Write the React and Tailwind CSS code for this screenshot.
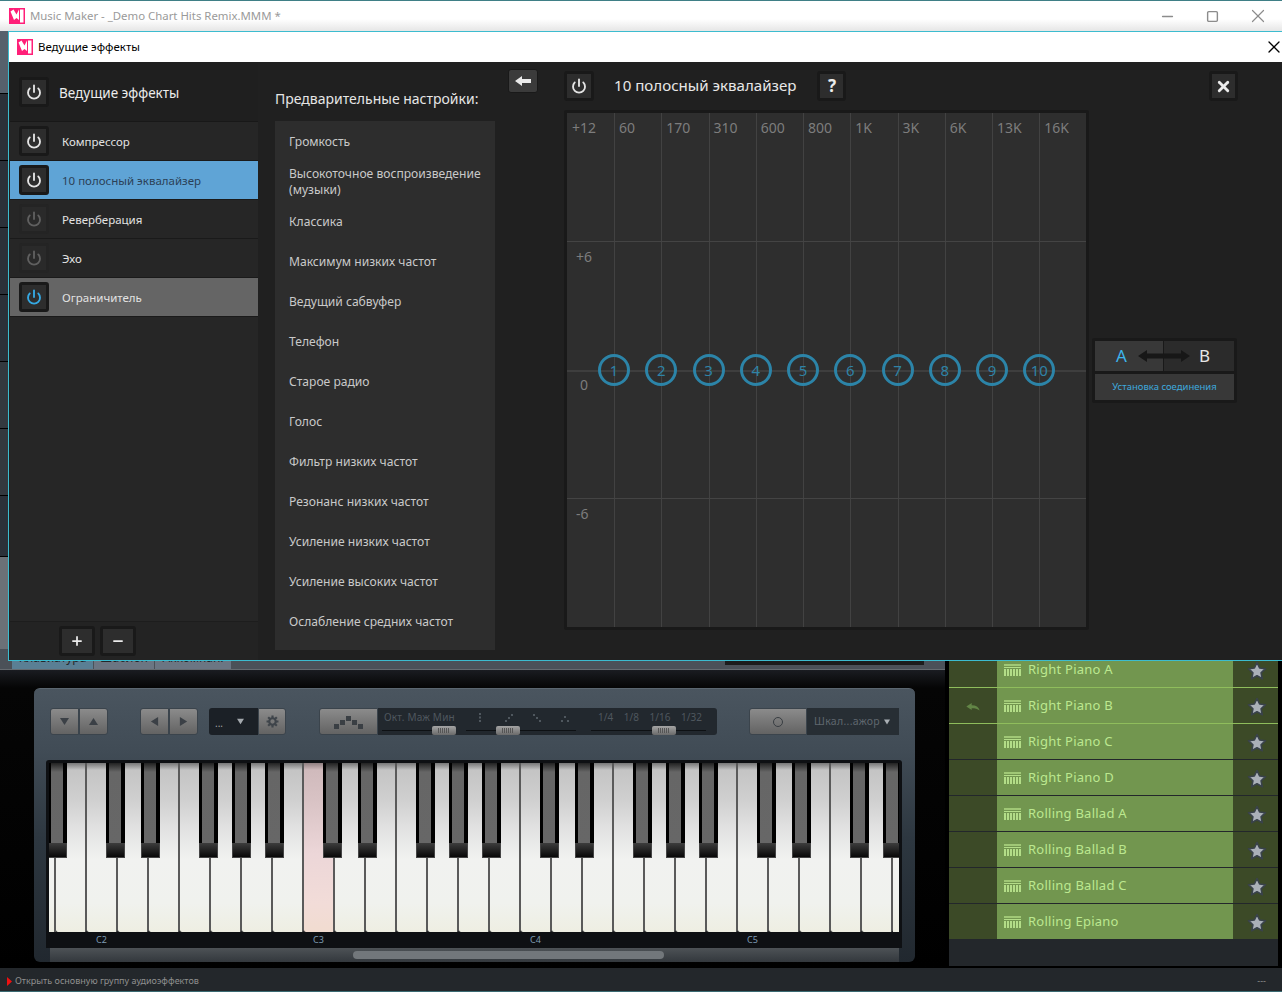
import React from "react";
import { Power, X, Minus, Plus, Square } from "lucide-react";

const effects = [
  { name: "Компрессор", state: "on" },
  { name: "10 полосный эквалайзер", state: "on", row: "bg-[#5fa4d6] text-[#2b4156]" },
  { name: "Реверберация", state: "off" },
  { name: "Эхо", state: "off" },
  { name: "Ограничитель", state: "active", row: "bg-[#656565] text-[#e2e2e2]" },
];

const presets = [
  "Громкость",
  "Высокоточное воспроизведение (музыки)",
  "Классика",
  "Максимум низких частот",
  "Ведущий сабвуфер",
  "Телефон",
  "Старое радио",
  "Голос",
  "Фильтр низких частот",
  "Резонанс низких частот",
  "Усиление низких частот",
  "Усиление высоких частот",
  "Ослабление средних частот",
];

const bands = ["60", "170", "310", "600", "800", "1K", "3K", "6K", "13K", "16K"];
const sounds = ["Right Piano A", "Right Piano B", "Right Piano C", "Right Piano D", "Rolling Ballad A", "Rolling Ballad B", "Rolling Ballad C", "Rolling Epiano"];

// black keys of one octave, px from the left of the keys area
const octave = [56.5, 91.5, 149.5, 182.5, 215.5];
const blackKeys = [-1.5];
for (let k = 0; k < 4; k++) octave.forEach((x) => blackKeys.push(x + k * 217));

function Logo({ className }) {
  return (
    <svg viewBox="0 0 16 16" className={className}>
      <rect width="16" height="16" fill="#ff1f78" />
      <path d="M1.5 3.5 L4.5 1.5 L7.5 6.5 L10 1.5 L10 12 L7.5 10 L5 12 Z" fill="#fff" />
      <rect x="11" y="1.5" width="3.5" height="13" fill="#fff" />
    </svg>
  );
}

function PowerBtn({ state = "on" }) {
  const frame = state === "off" ? "border-[#242424] bg-[#2a2a2a]" : "border-[#191919] bg-[#2d2d2d]";
  const icon = state === "off" ? "text-[#606060]" : state === "active" ? "text-[#35a9e4]" : "text-[#e4e4e4]";
  return (
    <div className={`flex h-[30px] w-[30px] shrink-0 items-center justify-center rounded-[3px] border-[3px] ${frame}`}>
      <Power size={16} strokeWidth={2.8} className={icon} />
    </div>
  );
}

function SquareBtn({ children, w = "w-[29px]" }) {
  return (
    <div className={`flex h-[30px] items-center justify-center rounded-[3px] border-[3px] border-[#191919] bg-[#2d2d2d] text-[#ececec] ${w}`}>
      {children}
    </div>
  );
}

function EffectsColumn() {
  return (
    <div className="flex w-[248px] shrink-0 flex-col bg-[#262626]">
      <div className="flex h-[60px] items-center gap-[10px] border-b border-[#181818] bg-[#1f1f1f] pl-[9px] text-[13.5px] text-[#ececec]">
        <PowerBtn />
        <span className="mt-[4px]">Ведущие эффекты</span>
      </div>
      {effects.map((fx) => (
        <div key={fx.name} className={`flex h-[39px] items-center gap-[13px] border-b border-[#1a1a1a] pl-[9px] text-[11.5px] ${fx.row || "text-[#e2e2e2]"}`}>
          <PowerBtn state={fx.state} />
          <span className="mt-[1px]">{fx.name}</span>
        </div>
      ))}
      <div className="flex-1" />
      <div className="flex h-[39px] items-start gap-[5px] border-t border-[#1d1d1d] bg-[#232323] pl-[49px] pt-[4px]">
        <SquareBtn w="w-[36px]"><Plus size={14} strokeWidth={3} /></SquareBtn>
        <SquareBtn w="w-[36px]"><Minus size={14} strokeWidth={3} /></SquareBtn>
      </div>
    </div>
  );
}

function PresetColumn() {
  return (
    <div className="flex w-[237px] shrink-0 flex-col pl-[17px]">
      <div className="flex h-[59px] items-center pt-[14px] text-[14px] text-[#e6e6e6]">Предварительные настройки:</div>
      <div className="h-[529px] w-[220px] bg-[#2d2d2d] pl-[14px] pr-[4px]">
        {presets.map((p) => (
          <div key={p} className="flex h-[40px] items-center text-[12.1px] leading-[16px] text-[#c9c9c9]">
            <span className="mt-[2px]">{p}</span>
          </div>
        ))}
      </div>
    </div>
  );
}

function Equalizer() {
  return (
    <div className="h-[520px] w-[525px] shrink-0 rounded-[2px] border-[3px] border-[#191919] bg-[#2e2e2e]">
      <div className="relative flex h-full overflow-hidden">
        <div className="relative w-[47px] shrink-0 text-[14px] text-[#7d7d7d]">
          <span className="absolute left-[5px] top-[4px]">+12</span>
          <span className="absolute left-[9px] top-[133px]">+6</span>
          <span className="absolute left-[13px] top-[261px]">0</span>
          <span className="absolute left-[9px] top-[390px]">-6</span>
        </div>
        {bands.map((b) => (
          <div key={b} className="w-[47.25px] shrink-0 border-l border-[#424242] pl-[4px] pt-[4px] text-[14px] text-[#7d7d7d]">
            {b}
          </div>
        ))}
        <div className="absolute inset-x-0 top-[128px] h-px bg-[#444444]" />
        <div className="absolute inset-x-0 top-[257px] h-[2px] bg-[#3e3e3e]" />
        <div className="absolute inset-x-0 top-[385px] h-px bg-[#444444]" />
        <div className="absolute left-[31px] top-[241px] flex gap-[15.25px]">
          {bands.map((b, i) => (
            <div key={b} className="flex h-[32px] w-[32px] items-center justify-center rounded-full border-[3px] border-[#2c84a8] text-[15px] text-[#2f83a6]">
              {i + 1}
            </div>
          ))}
        </div>
      </div>
    </div>
  );
}

function AbSwitch() {
  return (
    <div className="relative ml-[3px] mt-[228px] h-[65px] w-[145px] rounded-[2px] border-[3px] border-[#191919] bg-[#191919]">
      <div className="flex h-[30px] gap-[1px] text-[17px] leading-[30px]">
        <div className="w-[68px] bg-[#383838] pl-[21px] text-[#3db4ec]">A</div>
        <div className="flex-1 bg-[#2b2b2b] pl-[35px] text-[#e6e6e6]">B</div>
      </div>
      <div className="mt-[3px] flex h-[26px] items-center justify-center bg-[#383838] text-[9.5px] text-[#3ea8dc]">Установка соединения</div>
      <svg viewBox="0 0 52 12" className="absolute left-[43px] top-[9px] h-[12px] w-[52px]">
        <path d="M0 6 L9 0 V3.5 H43 V0 L52 6 L43 12 V8.5 H9 V12 Z" fill="#171717" />
      </svg>
    </div>
  );
}

function EffectPanel() {
  return (
    <div className="flex flex-1 pl-[13px]">
      <div className="mt-[7px] flex h-[24px] w-[30px] items-center justify-center rounded-[3px] border border-[#191919] bg-[#3b3b3b]">
        <svg viewBox="0 0 16 10" className="h-[10px] w-[16px]"><path d="M0 5 L7 0 V3 H16 V7 H7 V10 Z" fill="#eaeaea" /></svg>
      </div>
      <div className="ml-[26px] flex w-[674px] flex-col">
        <div className="flex h-[48px] items-start pt-[9px]">
          <PowerBtn />
          <span className="ml-[20px] mt-[3px] text-[15.1px] text-[#e8e8e8]">10 полосный эквалайзер</span>
          <div className="ml-[21px]"><SquareBtn><span className="text-[17px] font-bold">?</span></SquareBtn></div>
          <div className="ml-auto"><SquareBtn><X size={17} strokeWidth={4} /></SquareBtn></div>
        </div>
        <div className="flex">
          <Equalizer />
          <AbSwitch />
        </div>
      </div>
    </div>
  );
}

function Dialog() {
  return (
    <div className="absolute left-[8px] right-0 top-[31px] flex h-[630px] flex-col border border-r-0 border-[#3cbccf]">
      <div className="flex h-[30px] items-center bg-white pl-[8px] text-[11.45px] text-black">
        <Logo className="mr-[5px] h-[16px] w-[16px]" />
        Ведущие эффекты
        <X size={20} absoluteStrokeWidth strokeWidth={1.3} className="-mr-[2px] ml-auto" />
      </div>
      <div className="flex flex-1 bg-[#202020] pl-[1px]">
        <EffectsColumn />
        <PresetColumn />
        <EffectPanel />
      </div>
    </div>
  );
}

function Tri({ dir }) {
  const d = { down: "M0 1 H10 L5 9 Z", up: "M0 9 H10 L5 1 Z", left: "M9 0 V10 L1 5 Z", right: "M1 0 V10 L9 5 Z" }[dir];
  return <svg viewBox="0 0 10 10" className="h-[9px] w-[9px]"><path d={d} fill="#3b4046" /></svg>;
}

const toolBtn = "flex items-center justify-center border border-[#3b444c] bg-[linear-gradient(180deg,#8b8b8b,#636363)]";

function Thumb({ left }) {
  return (
    <div className={`absolute top-[18px] flex h-[9px] w-[24px] items-center justify-center rounded-[2px] bg-[linear-gradient(180deg,#a4a4a4,#6a6a6a)] ${left}`}>
      <div className="h-[5px] w-[12px] bg-[repeating-linear-gradient(90deg,#555_0,#555_1px,transparent_1px,transparent_2px)]" />
    </div>
  );
}

function Toolbar() {
  return (
    <div className="ml-[16px] flex h-[27px] items-stretch">
      <div className={`${toolBtn} w-[29px] rounded-l-[3px]`}><Tri dir="down" /></div>
      <div className={`${toolBtn} w-[29px] rounded-r-[3px]`}><Tri dir="up" /></div>
      <div className={`${toolBtn} ml-[32px] w-[29px] rounded-l-[3px]`}><Tri dir="left" /></div>
      <div className={`${toolBtn} w-[29px] rounded-r-[3px]`}><Tri dir="right" /></div>
      <div className="ml-[11px] flex w-[49px] items-center rounded-l-[3px] bg-[#1b2026] pl-[6px] pr-[14px] text-[10px] text-[#a0a0a0]">
        <span className="mt-[3px]">...</span>
        <svg viewBox="0 0 10 10" className="ml-auto h-[7px] w-[7px]"><path d="M0 1 H10 L5 9 Z" fill="#a4a9ae" /></svg>
      </div>
      <div className={`${toolBtn} w-[28px] rounded-r-[3px]`}>
        <svg viewBox="0 0 24 24" className="h-[13px] w-[13px]" fill="none" stroke="#3f454b" strokeWidth="4">
          <circle cx="12" cy="12" r="6" />
          <path d="M12 1v5M12 18v5M1 12h5M18 12h5M4 4l4 4M16 16l4 4M20 4l-4 4M8 16l-4 4" />
        </svg>
      </div>
      <div className={`${toolBtn} ml-[33px] w-[59px] rounded-l-[3px]`}>
        <svg viewBox="0 0 30 14" className="h-[14px] w-[30px]" fill="#3a3f44">
          <rect x="0" y="9" width="5" height="5" /><rect x="6" y="5" width="5" height="5" /><rect x="12" y="1" width="5" height="5" /><rect x="18" y="5" width="5" height="5" /><rect x="24" y="9" width="5" height="5" />
        </svg>
      </div>
      <div className="flex w-[339px] rounded-r-[3px] bg-[#22282e] text-[10px] leading-[18px] text-[#4f575e]">
        <div className="relative w-[88px] pl-[6px]">
          <span className="tracking-[0.2px]">Окт. Маж Мин</span>
          <div className="absolute left-[4px] top-[22px] h-px w-[74px] bg-[#0e1114]" />
          <Thumb left="left-[54px]" />
        </div>
        <div className="relative flex w-[125px] justify-between pl-[9.5px] pr-[22.5px] pt-[5px]">
          {[[[3, 0], [3, 3.5], [3, 7]], [[1, 7], [4, 4], [7, 1]], [[1, 1], [4, 4], [7, 7]], [[1, 7], [4, 3], [7, 7]]].map((dots, i) => (
            <svg key={i} viewBox="0 0 9 9" className="h-[9px] w-[9px]" fill="#4f575e">
              {dots.map(([x, y]) => <rect key={`${x}-${y}`} x={x} y={y} width="2" height="2" />)}
            </svg>
          ))}
          <div className="absolute left-[0px] top-[22px] h-px w-[110px] bg-[#0e1114]" />
          <Thumb left="left-[30px]" />
        </div>
        <div className="relative flex-1 pl-[7px]">
          <div className="flex w-[104px] justify-between"><span>1/4</span><span>1/8</span><span>1/16</span><span>1/32</span></div>
          <div className="absolute left-[0px] top-[22px] h-px w-[115px] bg-[#0e1114]" />
          <Thumb left="left-[61px]" />
        </div>
      </div>
      <div className={`${toolBtn} ml-[32px] w-[58px] rounded-l-[3px]`}>
        <div className="h-[10px] w-[10px] rounded-full border border-[#383d42]" />
      </div>
      <div className="flex w-[92px] items-center bg-[#272e34] pl-[7px] text-[10.5px] tracking-[0.3px] text-[#5f676e]">
        Шкал...ажор
        <svg viewBox="0 0 10 10" className="ml-[4px] h-[6px] w-[6px]"><path d="M0 1 H10 L5 9 Z" fill="#aab0b5" /></svg>
      </div>
    </div>
  );
}

function Keyboard() {
  const keys = Array.from({ length: 27 }, (_, i) => i);
  const white = "bg-[linear-gradient(180deg,#777_0,#c4c4c4_7px,#cfcfcf_36px,#e2e2e2_66px,#f1f2f0_96px,#f0f2ee_140px,#eeeee2_169px)]";
  return (
    <div className="ml-[12px] mt-[25px] w-[856px] rounded-t-[3px] bg-[#0e1013] px-[3px] pt-[3px]">
      <div className="relative flex h-[169px] overflow-hidden">
        <div className={`h-full w-[7px] shrink-0 border-r-2 border-[#5a5a5a] ${white}`} />
        {keys.map((i) => (
          <div
            key={i}
            className={`h-full w-[31px] shrink-0 rounded-b-[2px] border-r-2 border-[#5a5a5a] ${i === 8 ? "bg-[linear-gradient(180deg,#8f7f80_0,#d0babc_7px,#d8c2c4_36px,#ecd6d8_90px,#f2dcd8_140px,#f1dcd0_169px)]" : white}`}
          />
        ))}
        <div className={`h-full flex-1 ${white}`} />
        {blackKeys.map((x) => (
          <div key={x} className="absolute top-0 flex h-[95px] w-[19px] flex-col items-center rounded-b-[1px] bg-black" style={{ left: x }}>
            <div className="h-[80px] w-[12px] bg-[linear-gradient(180deg,#222_0,#666_9px,#676767)]" />
            <div className="h-[15px] w-full border-x border-b border-[#444] bg-[linear-gradient(180deg,#3d3d3d,#080808)]" />
          </div>
        ))}
      </div>
      <div className="flex h-[16px] overflow-hidden pl-[47px] text-[9px] leading-[16px] text-[#7e9cb4]">
        <span className="w-[217px] shrink-0">C2</span>
        <span className="w-[217px] shrink-0">C3</span>
        <span className="w-[217px] shrink-0">C4</span>
        <span className="w-[217px] shrink-0">C5</span>
      </div>
    </div>
  );
}

function PianoPanel() {
  return (
    <div className="relative flex flex-1 flex-col bg-[linear-gradient(180deg,#1a1c21_0,#050505_18px,#000_100%)]">
      <div className="ml-[34px] mt-[18px] h-[274px] w-[881px] rounded-[6px] border-t border-[#5b6670] bg-[linear-gradient(180deg,#4a555f_0,#414c56_60px,#2d3740_150px,#21282f_100%)] pt-[19px]">
        <Toolbar />
        <Keyboard />
        <div className="ml-[16px] h-[14px] w-[849px] bg-[linear-gradient(180deg,#4d5256,#33383d)] pl-[303px] pt-[3px]">
          <div className="h-[8px] w-[311px] rounded-full bg-[#72777b]" />
        </div>
      </div>
    </div>
  );
}

function KeysIcon() {
  return (
    <svg viewBox="0 0 17 12" className="h-[12px] w-[17px] shrink-0" fill="#b3dd88">
      <rect width="17" height="2" opacity="0.7" />
      <rect y="3" width="17" height="1" />
      <path d="M0 5h2v7H0zM3 5h2v7H3zM6 5h2v7H6zM9 5h2v7H9zM12 5h2v7h-2zM15 5h2v7h-2z" />
    </svg>
  );
}

function SoundList() {
  return (
    <div className="flex w-[335px] flex-col border-b-2 border-l-[4px] border-r-[2px] border-black bg-[#23272b] pt-[3px]">
      {sounds.map((s, i) => (
        <div key={s} className={`flex h-[36px] shrink-0 border-b ${i < 2 ? "border-[#8fbd5c]" : "border-[#23272b]"}`}>
          <div className="flex w-[48px] items-center justify-center bg-[#3c4a27] pt-[2px]">
            {i === 1 && (
              <svg viewBox="0 0 15 9" className="h-[8px] w-[14px]"><path d="M0 4 L6 0 V2.5 C11 2.5 14 4.5 15 8.5 C12.5 6.5 10 6 6 6 V8 Z" fill="#628546" /></svg>
            )}
          </div>
          <div className="flex flex-1 items-center gap-[7px] bg-[#72964f] pl-[7px] text-[13px] tracking-[0.25px] text-[#bce88f]">
            <KeysIcon />
            {s}
          </div>
          <div className="flex w-[45px] items-center justify-center bg-[#3c4a27] pl-[2px] pt-[2px]">
            <svg viewBox="0 0 20 20" className="h-[20px] w-[20px]">
              <path d="M10 1.5 L12.6 7 L18.5 7.7 L14.1 11.8 L15.3 17.8 L10 14.8 L4.7 17.8 L5.9 11.8 L1.5 7.7 L7.4 7 Z" fill="#aab0b8" stroke="#39424a" strokeWidth="1.6" strokeLinejoin="round" />
            </svg>
          </div>
        </div>
      ))}
    </div>
  );
}

export default function App() {
  return (
    <div className="relative flex h-[992px] w-[1282px] flex-col overflow-hidden bg-black font-['Noto_Sans','Open_Sans',sans-serif]">
      <div className="flex h-[31px] shrink-0 items-center border-t border-[#3f7f86] bg-[linear-gradient(180deg,#fff_60%,#e6e6e6)] pl-[9px] text-[11.4px] text-[#9a9a9a]">
        <Logo className="mr-[5px] h-[16px] w-[16px]" />
        Music Maker - _Demo Chart Hits Remix.MMM *
        <div className="ml-auto flex items-center pr-[13px] text-[#8c8c8c]">
          <Minus size={17} absoluteStrokeWidth strokeWidth={1.3} />
          <Square size={13} absoluteStrokeWidth strokeWidth={1.4} className="ml-[30px]" />
          <X size={22} absoluteStrokeWidth strokeWidth={1.2} className="ml-[28px]" />
        </div>
      </div>

      {/* what shows of the main window left of the dialog */}
      <div className="flex h-[618px] w-[8px] shrink-0 flex-col gap-[1px] bg-black">
        <div className="h-[62px] bg-[#56616c]" />
        <div className="h-[66px] bg-[#2b3139]" />
        <div className="h-[66px] bg-[#2b3139]" />
        <div className="h-[66px] bg-[#2b3139]" />
        <div className="h-[66px] bg-[#2b3139]" />
        <div className="h-[66px] bg-[#33393f]" />
        <div className="h-[66px] bg-[#33393f]" />
        <div className="h-[60px] bg-[#2b3139]" />
        <div className="flex-1 bg-[#6b7177]" />
      </div>

      <div className="flex h-[319px] shrink-0">
        <div className="flex w-[945px] shrink-0 flex-col">
          <div className="flex h-[21px] shrink-0 border-b border-[#666b70] bg-[#4b5158] pl-[12px] text-[12px] leading-[18px] text-[#22262a]">
            <div className="w-[81px] bg-[#5a7f94] text-center">Клавиатура</div>
            <div className="ml-[1px] w-[60px] bg-[#6b7683] text-center">Шаблон</div>
            <div className="ml-[1px] w-[76px] bg-[#6b7683] text-center">Аккомпан.</div>
            <div className="ml-auto mr-[21px] mt-[11px] h-[5px] w-[199px] bg-[#1c1c1c]" />
          </div>
          <PianoPanel />
        </div>
        <SoundList />
      </div>

      <div className="flex h-[24px] shrink-0 items-center border-b border-[#3a6a72] bg-[#23272b] pl-[7px] pr-[16px] pt-[3px] text-[9px] text-[#8f8f8f]">
        <svg viewBox="0 0 5 9" className="mr-[3px] h-[9px] w-[5px]"><path d="M0 0 L5 4.5 L0 9 Z" fill="#ee1111" /></svg>
        Открыть основную группу аудиоэффектов
        <span className="ml-auto">---</span>
      </div>

      <Dialog />
    </div>
  );
}
